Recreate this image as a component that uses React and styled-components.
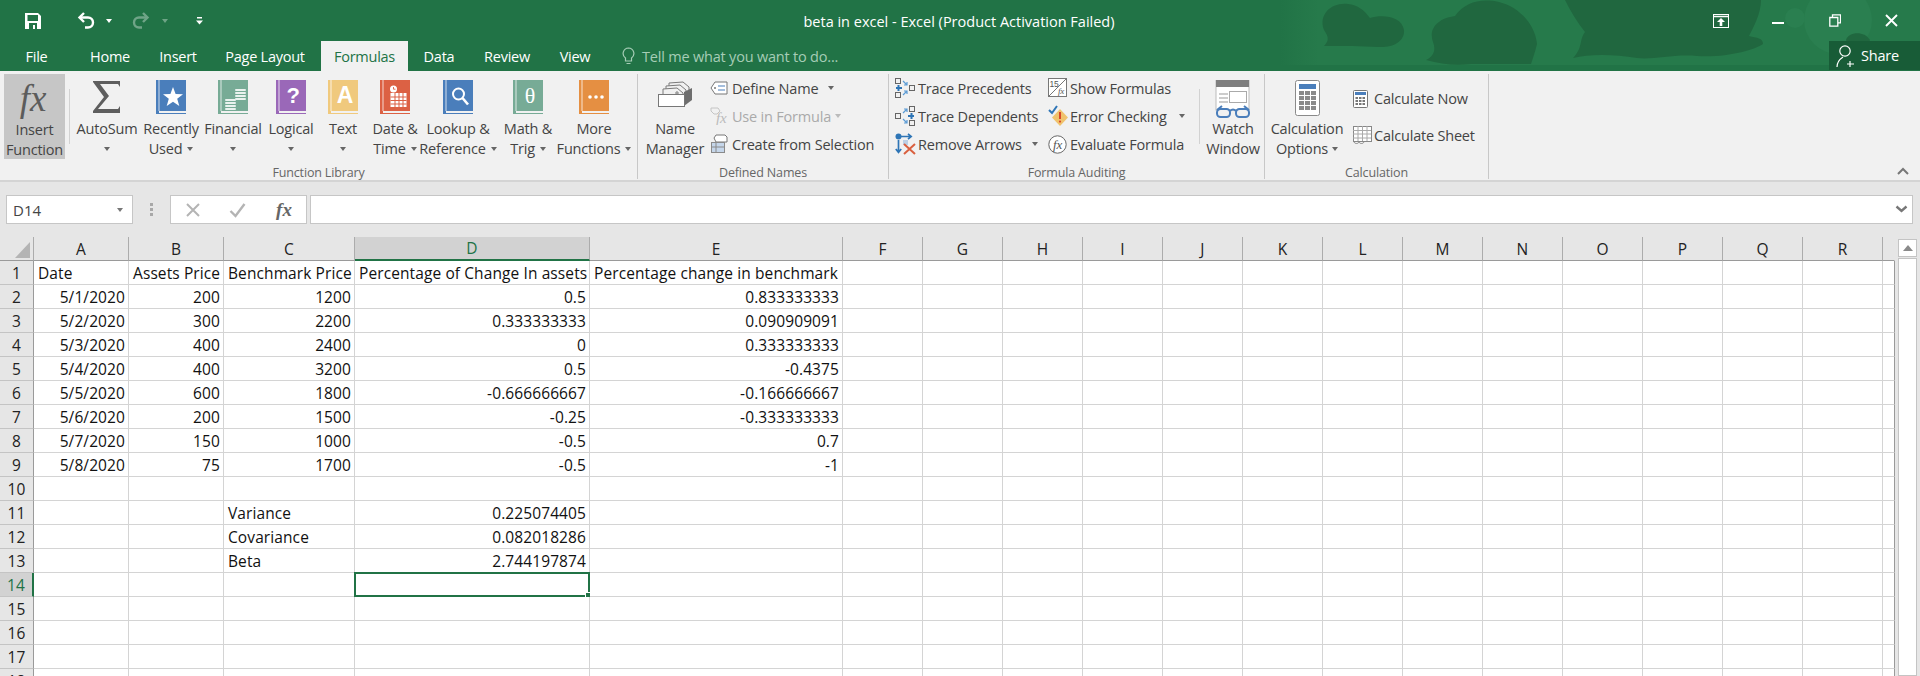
import React from 'react';
import styled, { createGlobalStyle } from 'styled-components';

const GREEN = '#217346';
const UI_FONT = '"Open Sans", "Liberation Sans", sans-serif';

const Global = createGlobalStyle`
  html, body {
    margin: 0;
    padding: 0;
    height: 676px;
    overflow: hidden;
    background: #e6e6e6;
  }
`;

const Page = styled.div`
  width: 1920px;
  height: 676px;
  overflow: hidden;
  font-family: ${UI_FONT};
  display: flex;
  flex-direction: column;
`;

const Header = styled.header`
  position: relative;
  height: 71px;
  flex: none;
  background: ${GREEN};
  color: #fff;
`;

const Clouds = styled.svg`
  position: absolute;
  top: 0;
  right: 0;
`;

const TitleBar = styled.div`
  position: relative;
  height: 41px;
  display: grid;
  grid-template-columns: 1fr auto 1fr;
  align-items: center;
`;

const Qat = styled.div`
  display: flex;
  align-items: center;
  height: 38px;
`;

const QatSlot = styled.div`
  width: ${p => p.$w}px;
  margin-left: ${p => p.$ml || 0}px;
  display: flex;
  justify-content: center;
  align-items: center;
  opacity: ${p => (p.$off ? 0.35 : 1)};
`;

const Title = styled.div`
  font-size: 14.5px;
  padding-right: 2px;
  margin-top: 1px;
`;

const WindowButtons = styled.div`
  display: flex;
  justify-content: flex-end;
  height: 38px;
`;

const WindowButton = styled.div`
  width: 57px;
  display: flex;
  justify-content: center;
  align-items: center;
`;

const TabRow = styled.nav`
  position: relative;
  height: 30px;
  display: flex;
  font-size: 14.5px;
`;

const Tab = styled.div`
  width: ${p => p.$w}px;
  display: flex;
  justify-content: center;
  align-items: center;
  letter-spacing: -0.25px;
  background: ${p => (p.$active ? '#f1f1f1' : 'transparent')};
  color: ${p => (p.$active ? GREEN : '#fff')};
`;

const TellMe = styled.div`
  display: flex;
  align-items: center;
  gap: 7px;
  margin-left: 16px;
  color: #a6cdb6;
  letter-spacing: -0.2px;
`;

const Share = styled.div`
  margin-left: auto;
  width: 91px;
  height: 29px;
  background: #185c37;
  display: flex;
  align-items: center;
  gap: 5px;
  padding-left: 7px;
  box-sizing: border-box;
  letter-spacing: -0.2px;
`;

const Ribbon = styled.section`
  height: 111px;
  flex: none;
  box-sizing: border-box;
  background: #f1f1f1;
  border-bottom: 2px solid #d4d4d4;
  display: flex;
  color: #444;
  font-size: 14.5px;
  letter-spacing: -0.2px;
`;

const Group = styled.div`
  width: ${p => p.$w}px;
  flex: none;
  box-sizing: border-box;
  margin-top: 3px;
  margin-bottom: 1px;
  border-right: 1px solid #c8c8c8;
  display: flex;
  flex-direction: column;
`;

const GroupBody = styled.div`
  flex: 1;
  display: flex;
  padding-left: ${p => p.$pad || 0}px;
`;

const GroupLabel = styled.div`
  height: 16px;
  font-size: 12.5px;
  line-height: 20px;
  letter-spacing: -0.15px;
  text-align: center;
  color: #666;
`;

const BigButton = styled.div`
  width: ${p => p.$w}px;
  height: 85px;
  flex: none;
  box-sizing: border-box;
  padding-top: 6px;
  display: flex;
  flex-direction: column;
  align-items: center;
  background: ${p => (p.$pressed ? '#c6c6c6' : 'transparent')};
`;

const BigIcon = styled.div`
  height: 40px;
  display: flex;
  align-items: flex-start;
`;

const BigLine = styled.div`
  height: 20px;
  line-height: 20px;
  white-space: nowrap;
  display: flex;
  align-items: center;
  gap: 4px;
`;

const Caret = styled.span`
  width: 0;
  height: 0;
  display: inline-block;
  margin-left: ${p => p.$ml || 0}px;
  border-left: 3.5px solid transparent;
  border-right: 3.5px solid transparent;
  border-top: 4px solid ${p => p.$color || '#666'};
`;

const VSep = styled.div`
  width: 1px;
  height: 55px;
  flex: none;
  margin: 15px 3px 0 4px;
  background: #d2d2d2;
`;

const SmallColumn = styled.div`
  width: ${p => p.$w}px;
  flex: none;
  display: flex;
  flex-direction: column;
  margin-left: ${p => p.$ml || 0}px;
  padding-top: ${p => (p.$top === undefined ? 0 : p.$top)}px;
`;

const SmallButton = styled.div`
  height: ${p => p.$h || 28}px;
  display: flex;
  align-items: center;
  white-space: nowrap;
  color: ${p => (p.$off ? '#aaa' : 'inherit')};
`;

const SmallIcon = styled.div`
  width: ${p => p.$w || 22}px;
  flex: none;
  display: flex;
  align-items: center;
`;

const RibbonEnd = styled.div`
  flex: 1;
  display: flex;
  justify-content: flex-end;
  align-items: flex-end;
  padding: 0 11px 5px 0;
`;

const FormulaBand = styled.div`
  height: 55px;
  flex: none;
  box-sizing: border-box;
  padding: 13px 7px 13px 6px;
  display: flex;
  align-items: stretch;
  background: #e6e6e6;
`;

const Field = styled.div`
  background: #fff;
  border: 1px solid #c6c6c6;
  box-sizing: border-box;
  display: flex;
  align-items: center;
`;

const NameBox = styled(Field)`
  width: 127px;
  flex: none;
  justify-content: space-between;
  padding: 0 9px 0 6px;
  font-size: 15px;
  color: #444;
`;

const GripDots = styled.div`
  width: 37px;
  flex: none;
  display: flex;
  flex-direction: column;
  align-items: center;
  justify-content: center;
  gap: 2px;
  & span {
    width: 3px;
    height: 3px;
    background: #a8a8a8;
  }
`;

const FxBox = styled(Field)`
  width: 137px;
  flex: none;
  gap: 28px;
  padding-left: 14px;
`;

const FormulaInput = styled(Field)`
  flex: 1;
  margin-left: 3px;
  justify-content: flex-end;
  padding-right: 4px;
`;

const SheetArea = styled.div`
  flex: 1;
  display: flex;
  min-height: 0;
`;

const SheetGrid = styled.div`
  display: grid;
  grid-template-columns: 34px 95px 95px 131px 235px 253px repeat(13, 80px) 12px;
  grid-auto-rows: 24px;
  width: 1895px;
  flex: none;
  font-size: 15.5px;
  letter-spacing: 0.1px;
  color: #111;
`;

const ColHead = styled.div`
  box-sizing: border-box;
  display: flex;
  justify-content: center;
  align-items: center;
  border-right: 1px solid ${p => (p.$end ? 'transparent' : '#acacac')};
  border-bottom: ${p => (p.$on ? `2px solid ${GREEN}` : '1px solid #9a9a9a')};
  background: ${p => (p.$on ? '#d2d2d2' : '#e6e6e6')};
  color: ${p => (p.$on ? GREEN : '#222')};
`;

const Corner = styled.div`
  box-sizing: border-box;
  border-right: 1px solid #acacac;
  border-bottom: 1px solid #9a9a9a;
  display: flex;
  justify-content: flex-end;
  align-items: flex-end;
  padding: 0 3px 2px 0;
`;

const RowHead = styled.div`
  box-sizing: border-box;
  display: flex;
  justify-content: center;
  align-items: center;
  border-right: ${p => (p.$on ? `2px solid ${GREEN}` : '1px solid #9a9a9a')};
  border-bottom: 1px solid #c4c4c4;
  background: ${p => (p.$on ? '#d2d2d2' : '#e6e6e6')};
  color: ${p => (p.$on ? GREEN : '#222')};
`;

const Cell = styled.div`
  position: relative;
  box-sizing: border-box;
  background: #fff;
  border-right: 1px solid ${p => (p.$last ? '#9a9a9a' : '#d4d4d4')};
  border-bottom: 1px solid #d4d4d4;
  padding: 0 3px 0 4px;
  line-height: 24px;
  white-space: nowrap;
  text-align: ${p => (p.$num ? 'right' : 'left')};
`;

const Selection = styled.div`
  position: absolute;
  inset: -1px;
  border: 2px solid ${GREEN};
  &::after {
    content: '';
    position: absolute;
    right: -4px;
    bottom: -4px;
    width: 5px;
    height: 5px;
    background: ${GREEN};
    border: 1px solid #fff;
  }
`;

const Scrollbar = styled.div`
  width: 19px;
  margin-left: 3px;
  flex: none;
  display: flex;
  flex-direction: column;
  gap: 1px;
  padding-top: 2px;
`;

const ScrollUp = styled.div`
  height: 18px;
  flex: none;
  box-sizing: border-box;
  background: #fff;
  border: 1px solid #c4c4c4;
  display: flex;
  justify-content: center;
  align-items: center;
`;

const ScrollThumb = styled.div`
  flex: 1;
  background: #fff;
  border: 1px solid #c4c4c4;
`;

/* ---- drawn icons ---- */

const Book = ({ color, children }) => (
  <svg width="30" height="34" viewBox="0 0 30 34">
    <rect width="30" height="34" fill={color} />
    <rect x="2.5" width="1" height="31" fill="#fff" opacity="0.75" />
    <rect x="3" y="31" width="27" height="2" fill="#f1f1f1" />
    {children}
  </svg>
);

const BookLetter = ({ children, size = 22, family = 'Liberation Sans', weight = 700, y = 23 }) => (
  <text x="17" y={y} textAnchor="middle" fill="#fff" fontFamily={family} fontSize={size} fontWeight={weight}>
    {children}
  </text>
);

const Coins = () => (
  <g fill="#fff" opacity="0.85">
    {[9, 12, 15, 18].map(y => (
      <rect key={y} x="17" y={y} width="11" height="2" rx="1" />
    ))}
    {[19, 22, 25, 28].map(y => (
      <rect key={y} x="7" y={y} width="11" height="2" rx="1" />
    ))}
  </g>
);

const icons = {
  fx: (
    <svg width="50" height="40" viewBox="0 0 50 40" overflow="visible">
      <text x="23" y="31" textAnchor="middle" fill="#5c5c5c" fontFamily="Liberation Serif" fontStyle="italic" fontSize="37">
        fx
      </text>
    </svg>
  ),
  sigma: (
    <svg width="30" height="34" viewBox="0 0 30 34">
      <path d="M1 1h27v6l-2-3H8l9 12L6 29h20l2-3v7H1v-2l11-14L1 2z" fill="#5e5e5e" />
    </svg>
  ),
  star: (
    <Book color="#4a7ebb">
      <polygon points="17,7 19.6,14 27,14.2 21.2,18.8 23.3,26 17,21.8 10.7,26 12.8,18.8 7,14.2 14.4,14" fill="#fff" />
    </Book>
  ),
  coins: (
    <Book color="#77ab96">
      <Coins />
    </Book>
  ),
  question: (
    <Book color="#9a68b8">
      <BookLetter>?</BookLetter>
    </Book>
  ),
  letter: (
    <Book color="#f0c97d">
      <BookLetter size={23}>A</BookLetter>
    </Book>
  ),
  date: (
    <Book color="#dc6144">
      <circle cx="13.5" cy="9" r="3.5" fill="#fff" />
      <path d="M13.5 7v2.2h2" fill="none" stroke="#dc6144" strokeWidth="0.9" />
      <rect x="10.5" y="13" width="16" height="14" fill="#fff" />
      <g fill="#dc6144">
        {[16.5, 20, 23.5].map(y => (
          <rect key={y} x="10.5" y={y} width="16" height="1" />
        ))}
        {[14.5, 18.5, 22.5].map(x => (
          <rect key={x} x={x} y="13" width="1" height="14" />
        ))}
      </g>
    </Book>
  ),
  lookup: (
    <Book color="#4a7ebb">
      <circle cx="15.5" cy="14" r="5.5" fill="none" stroke="#fff" strokeWidth="2" />
      <path d="M19.5 18l5.5 6.5" stroke="#fff" strokeWidth="2.6" />
    </Book>
  ),
  theta: (
    <Book color="#77ab96">
      <BookLetter size={22} family="Liberation Serif" weight={400} y={23}>θ</BookLetter>
    </Book>
  ),
  more: (
    <Book color="#e58f42">
      <g fill="#fff">
        <circle cx="11" cy="17" r="1.8" />
        <circle cx="17" cy="17" r="1.8" />
        <circle cx="23" cy="17" r="1.8" />
      </g>
    </Book>
  ),
  manager: (
    <svg width="36" height="28" viewBox="0 0 36 28">
      <g fill="#f1f1f1" stroke="#7a7a7a" strokeWidth="1">
        <path d="M12 3l14-1 6 5v8l-20 2z" />
        <path d="M9 6l14-1 6 5v8l-20 2z" />
        <path d="M6 9l14-1 6 5v8H6z" />
      </g>
      <circle cx="20" cy="13" r="1.2" fill="none" stroke="#777" />
      <path d="M27 12l8-4v12l-8 6z" fill="#6e6e6e" />
      <rect x="1.5" y="14.5" width="26" height="12" fill="#fff" stroke="#777" />
    </svg>
  ),
  tag: (
    <svg width="18" height="14" viewBox="0 0 18 14">
      <path d="M5 1h12v12H5L1 7z" fill="#fff" stroke="#777" />
      <circle cx="5" cy="7" r="1" fill="#777" />
      <path d="M8 5h7M8 9h7" stroke="#4a7ebb" strokeWidth="1.2" />
    </svg>
  ),
  useFx: (
    <svg width="20" height="18" viewBox="0 0 20 18">
      <path d="M1 1h7l2 3-3 3H4L1 4z" fill="none" stroke="#c4c4c4" />
      <text x="6" y="16" fill="#bbb" fontFamily="Liberation Serif" fontStyle="italic" fontSize="15">fx</text>
    </svg>
  ),
  create: (
    <svg width="18" height="20" viewBox="0 0 18 20">
      <path d="M6 1h9l2 2v5H6L4 4z" fill="#fff" stroke="#777" />
      <rect x="1.5" y="8.5" width="13" height="10" fill="#c5d6ea" stroke="#8a8a8a" />
      <path d="M1 13h13M6 8v10" stroke="#8a8a8a" />
    </svg>
  ),
  tracePre: (
    <svg width="20" height="20" viewBox="0 0 20 20">
      <g fill="none" stroke="#666">
        <rect x="0.5" y="0.5" width="5" height="5" />
        <rect x="0.5" y="14.5" width="5" height="5" />
        <rect x="14.5" y="7.5" width="5" height="5" />
      </g>
      <path d="M1 10h6M3.5 7v6" stroke="#2e75b6" strokeWidth="2" />
      <path d="M8 3l4 4m0-3v3H9M8 17l4-4m0 3v-3H9" fill="none" stroke="#5b9bd5" strokeWidth="1.2" />
    </svg>
  ),
  traceDep: (
    <svg width="20" height="20" viewBox="0 0 20 20">
      <g fill="none" stroke="#666">
        <rect x="14.5" y="0.5" width="5" height="5" />
        <rect x="14.5" y="14.5" width="5" height="5" />
        <rect x="0.5" y="7.5" width="5" height="5" />
      </g>
      <path d="M13 10h6M16.5 7v6" stroke="#2e75b6" strokeWidth="2" />
      <path d="M8 7l4-4m-3 0h3v3M8 13l4 4m-3 0h3v-3" fill="none" stroke="#5b9bd5" strokeWidth="1.2" />
    </svg>
  ),
  removeArrows: (
    <svg width="21" height="22" viewBox="0 0 21 22">
      <circle cx="3.5" cy="3.5" r="3" fill="#2e75b6" />
      <path d="M6 3.5h10M13 .8l3.2 2.7L13 6.2M3.5 7v12M.8 16l2.7 3.4L6.2 16" fill="none" stroke="#2e75b6" strokeWidth="1.7" />
      <rect x="8" y="7" width="5" height="5" fill="#bcd0e6" />
      <path d="M9 11l11 10M20 11L9 21" stroke="#d9603f" strokeWidth="2" />
    </svg>
  ),
  showFormulas: (
    <svg width="19" height="20" viewBox="0 0 19 20">
      <rect x="0.5" y="0.5" width="18" height="18" fill="#fff" stroke="#777" />
      <path d="M18 1L1 18" stroke="#777" />
      <text x="1.5" y="9" fill="#555" fontFamily="Liberation Sans" fontSize="8.5">15</text>
      <text x="10" y="16" fill="#555" fontFamily="Liberation Serif" fontStyle="italic" fontSize="9">fx</text>
    </svg>
  ),
  errorCheck: (
    <svg width="20" height="22" viewBox="0 0 20 22">
      <path d="M1 5l3 3 5-7" fill="none" stroke="#2e75b6" strokeWidth="2" />
      <path d="M12 4l8 8.5-8 8.5-8-8.5z" fill="#f0c36d" />
      <path d="M12 7v7" stroke="#d9482b" strokeWidth="2" />
      <circle cx="12" cy="16.6" r="1.1" fill="#d9482b" />
    </svg>
  ),
  evaluate: (
    <svg width="19" height="19" viewBox="0 0 19 19">
      <circle cx="9.5" cy="9.5" r="8.7" fill="#fff" stroke="#666" />
      <text x="9.5" y="14" textAnchor="middle" fill="#555" fontFamily="Liberation Serif" fontStyle="italic" fontSize="13">fx</text>
    </svg>
  ),
  watch: (
    <svg width="37" height="38" viewBox="0 0 37 38">
      <rect x="1" y="0" width="33" height="30" fill="#fff" stroke="#bbb" />
      <rect x="1" y="0" width="33" height="7" fill="#7f7f7f" />
      <path d="M4 14h9M4 18h9M4 22h9" stroke="#999" />
      <rect x="14.5" y="11.5" width="17" height="11" fill="#fff" stroke="#aaa" />
      <g fill="#f1f1f1" stroke="#4a7ebb" strokeWidth="2">
        <rect x="2" y="29" width="13" height="8" rx="3.5" />
        <rect x="21" y="29" width="13" height="8" rx="3.5" />
      </g>
      <path d="M15 31c2-2 4-2 6 0M2 30l5-4M34 30l-5-4" fill="none" stroke="#4a7ebb" strokeWidth="2" />
    </svg>
  ),
  calcBig: (
    <svg width="25" height="36" viewBox="0 0 25 36">
      <rect x="0.5" y="0.5" width="24" height="35" rx="2" fill="#fff" stroke="#8a8a8a" />
      <rect x="4" y="4" width="17" height="5" fill="#4a7ebb" />
      <g fill="#8a8a8a">
        {[11, 16, 21, 26].map(y =>
          [4, 10, 16].map(x => <rect key={`${x}-${y}`} x={x} y={y} width="5" height="4" />)
        )}
      </g>
    </svg>
  ),
  calcNow: (
    <svg width="15" height="18" viewBox="0 0 15 18">
      <rect x="0.5" y="0.5" width="14" height="17" rx="1" fill="#fff" stroke="#777" />
      <rect x="2" y="2" width="11" height="3" fill="#4a7ebb" />
      <g fill="#777">
        {[7, 10, 13].map(y =>
          [2.5, 6, 9.5].map(x => <rect key={`${x}-${y}`} x={x} y={y} width="2.5" height="2" />)
        )}
      </g>
    </svg>
  ),
  calcSheet: (
    <svg width="19" height="19" viewBox="0 0 19 19">
      <rect x="0.5" y="0.5" width="18" height="15" fill="#fff" stroke="#888" />
      <path d="M0 4.5h18M0 8h18M0 12h18M5 0v15M9.5 0v15M14 0v15" stroke="#aaa" />
      <path d="M1 16c1 2 4 2 5 0 1 2 4 2 5 0" fill="none" stroke="#888" />
    </svg>
  ),
};

const SaveIcon = () => (
  <svg width="16" height="16" viewBox="0 0 16 16">
    <path d="M0 0h13l3 3v13H0z" fill="#fff" />
    <rect x="2.5" y="2" width="10.5" height="6" fill={GREEN} />
    <rect x="4" y="10" width="8" height="6" fill={GREEN} />
    <rect x="8" y="12" width="2" height="4" fill="#fff" />
  </svg>
);

const UndoIcon = ({ flip }) => (
  <svg width="19" height="19" viewBox="0 0 19 19" style={flip ? { transform: 'scaleX(-1)' } : undefined}>
    <path d="M7 2L2.5 6.5 7 11" fill="none" stroke="#fff" strokeWidth="2.4" />
    <path d="M3 6.5h8a5 5 0 0 1 0 10H8" fill="none" stroke="#fff" strokeWidth="2.4" />
  </svg>
);

const QatMore = () => (
  <svg width="7" height="8" viewBox="0 0 7 8">
    <rect x="1" width="5" height="1.5" fill="#fff" />
    <path d="M0 3.5h7L3.5 7.5z" fill="#fff" />
  </svg>
);

const BulbIcon = () => (
  <svg width="13" height="18" viewBox="0 0 13 18">
    <path d="M6.5 1A5.5 5.5 0 0 0 3.5 11v3h6v-3A5.5 5.5 0 0 0 6.5 1zM4.5 16.5h4" fill="none" stroke="#a6cdb6" strokeWidth="1.2" />
  </svg>
);

const ShareIcon = () => (
  <svg width="20" height="24" viewBox="0 0 20 24">
    <circle cx="9" cy="7" r="5.2" fill="none" stroke="#fff" strokeWidth="1.2" />
    <path d="M1 23c0-5 3-8 6-10M14 17v6M11 20h7" fill="none" stroke="#fff" strokeWidth="1.2" />
  </svg>
);

const WINDOW_ICONS = [
  <svg key="display" width="16" height="14" viewBox="0 0 16 14">
    <rect x="0.5" y="0.5" width="15" height="13" fill="none" stroke="#fff" />
    <path d="M0 2.5h16" stroke="#fff" strokeWidth="1.5" />
    <path d="M8 4l-4 4h2.7v4h2.6V8H12z" fill="#fff" />
  </svg>,
  <svg key="min" width="12" height="12" viewBox="0 0 12 12">
    <rect y="7" width="12" height="2" fill="#fff" />
  </svg>,
  <svg key="restore" width="12" height="13" viewBox="0 0 12 13">
    <path d="M3.5 3V.8h8v8H9M.8 3.5h8v8.7h-8z" fill="none" stroke="#fff" strokeWidth="1.3" />
  </svg>,
  <svg key="close" width="13" height="13" viewBox="0 0 13 13">
    <path d="M1 1l11 11M12 1L1 12" stroke="#fff" strokeWidth="1.9" />
  </svg>,
];

/* ---- data ---- */

const TABS = [
  ['File', 73],
  ['Home', 74],
  ['Insert', 62],
  ['Page Layout', 112],
  ['Formulas', 87],
  ['Data', 62],
  ['Review', 74],
  ['View', 62],
];

const LIBRARY = [
  { icon: 'sigma', w: 68, lines: ['AutoSum'], caret: 'below' },
  { icon: 'star', w: 60, lines: ['Recently', 'Used'], caret: 'inline' },
  { icon: 'coins', w: 64, lines: ['Financial'], caret: 'below' },
  { icon: 'question', w: 52, lines: ['Logical'], caret: 'below' },
  { icon: 'letter', w: 52, lines: ['Text'], caret: 'below' },
  { icon: 'date', w: 52, lines: ['Date &', 'Time'], caret: 'inline' },
  { icon: 'lookup', w: 74, lines: ['Lookup &', 'Reference'], caret: 'inline' },
  { icon: 'theta', w: 66, lines: ['Math &', 'Trig'], caret: 'inline' },
  { icon: 'more', w: 66, lines: ['More', 'Functions'], caret: 'inline' },
];

const COLS = ['A', 'B', 'C', 'D', 'E', 'F', 'G', 'H', 'I', 'J', 'K', 'L', 'M', 'N', 'O', 'P', 'Q', 'R'];

const ROWS = {
  1: ['Date', 'Assets Price', 'Benchmark Price', 'Percentage of Change In assets', 'Percentage change in benchmark'],
  2: ['5/1/2020', 200, 1200, 0.5, 0.833333333],
  3: ['5/2/2020', 300, 2200, 0.333333333, 0.090909091],
  4: ['5/3/2020', 400, 2400, 0, 0.333333333],
  5: ['5/4/2020', 400, 3200, 0.5, -0.4375],
  6: ['5/5/2020', 600, 1800, -0.666666667, -0.166666667],
  7: ['5/6/2020', 200, 1500, -0.25, -0.333333333],
  8: ['5/7/2020', 150, 1000, -0.5, 0.7],
  9: ['5/8/2020', 75, 1700, -0.5, -1],
  11: [null, null, 'Variance', 0.225074405],
  12: [null, null, 'Covariance', 0.082018286],
  13: [null, null, 'Beta', 2.744197874],
};

const isRight = (value, col, row) => row !== 1 && value !== null && value !== undefined && (typeof value === 'number' || col === 0);

/* ---- ribbon parts ---- */

const LibraryButton = ({ icon, w, lines, caret }) => (
  <BigButton $w={w}>
    <BigIcon>{icons[icon]}</BigIcon>
    <BigLine>{lines[0]}</BigLine>
    <BigLine>
      {lines[1]}
      {caret === 'below' && <Caret />}
      {caret === 'inline' && <Caret $ml={1} />}
    </BigLine>
  </BigButton>
);

const SmallAction = ({ icon, slot, caret, off, h, children }) => (
  <SmallButton $off={off} $h={h}>
    <SmallIcon $w={slot}>{icons[icon]}</SmallIcon>
    {children}
    {caret && <Caret $ml={caret} $color={off ? '#bbb' : '#666'} />}
  </SmallButton>
);

const CloudArt = () => (
  <Clouds width="640" height="65" viewBox="1280 0 640 65">
    <defs>
      <linearGradient id="band" x1="0" x2="1" y1="0" y2="0">
        <stop offset="0" stopColor="#267a4b" stopOpacity="0" />
        <stop offset="0.06" stopColor="#267a4b" stopOpacity="1" />
      </linearGradient>
    </defs>
    <rect x="1280" width="640" height="65" fill="url(#band)" />
    <g fill="#2a7f50">
      <circle cx="1838" cy="20" r="34" />
      <circle cx="1795" cy="18" r="10" />
    </g>
    <g fill="#20673f">
      <path d="M1324 46c6-6 4-10 0-16-6-16 8-28 24-26 10 1 16 6 22 14 12-4 32-2 34 12 1 12-12 18-26 17-18-1-32-1-54-1z" />
      <path d="M1426 60c8-4 10-10 7-18-5-14 6-24 22-26 10-14 26-18 44-14 20 5 36 22 38 42-2 8-4 14-6 20h-60c-16 2-30 0-45-4z" />
      <path d="M1565 0h196c0 14-8 28-12 36 8 2 14 2 14 8-8 6-38 14-66 12-24-2-44 4-60 2-24-4-48-4-64 0 10-10 6-18 12-26-8-10-14-20-20-32z" />
      <path d="M1846 40c2-8 18-10 24 0l-4 8h-16z" />
    </g>
  </Clouds>
);

export default function App() {
  return (
    <Page>
      <Global />

      <Header>
        <CloudArt />
        <TitleBar>
          <Qat>
            <QatSlot $w={66}><SaveIcon /></QatSlot>
            <QatSlot $w={40}><UndoIcon /></QatSlot>
            <QatSlot $w={6}><Caret $color="#fff" /></QatSlot>
            <QatSlot $w={44} $ml={6} $off><UndoIcon flip /></QatSlot>
            <QatSlot $w={6} $off><Caret $color="#fff" /></QatSlot>
            <QatSlot $w={10} $ml={26}><QatMore /></QatSlot>
          </Qat>
          <Title>beta in excel - Excel (Product Activation Failed)</Title>
          <WindowButtons>
            {WINDOW_ICONS.map(icon => (
              <WindowButton key={icon.key}>{icon}</WindowButton>
            ))}
          </WindowButtons>
        </TitleBar>
        <TabRow>
          {TABS.map(([label, w]) => (
            <Tab key={label} $w={w} $active={label === 'Formulas'}>{label}</Tab>
          ))}
          <TellMe>
            <BulbIcon />
            Tell me what you want to do...
          </TellMe>
          <Share>
            <ShareIcon />
            Share
          </Share>
        </TabRow>
      </Header>

      <Ribbon>
        <Group $w={638}>
          <GroupBody $pad={4}>
            <BigButton $w={61} $pressed>
              <BigIcon>{icons.fx}</BigIcon>
              <BigLine>Insert</BigLine>
              <BigLine>Function</BigLine>
            </BigButton>
            <VSep />
            {LIBRARY.map(item => (
              <LibraryButton key={item.icon} {...item} />
            ))}
          </GroupBody>
          <GroupLabel>Function Library</GroupLabel>
        </Group>

        <Group $w={251}>
          <GroupBody $pad={2}>
            <BigButton $w={70}>
              <BigIcon>{icons.manager}</BigIcon>
              <BigLine>Name</BigLine>
              <BigLine>Manager</BigLine>
            </BigButton>
            <SmallColumn $w={175}>
              <SmallAction icon="tag" caret={10}>Define Name</SmallAction>
              <SmallAction icon="useFx" caret={4} off>Use in Formula</SmallAction>
              <SmallAction icon="create">Create from Selection</SmallAction>
            </SmallColumn>
          </GroupBody>
          <GroupLabel>Defined Names</GroupLabel>
        </Group>

        <Group $w={376}>
          <GroupBody $pad={6}>
            <SmallColumn $w={153}>
              <SmallAction icon="tracePre" slot={23}>Trace Precedents</SmallAction>
              <SmallAction icon="traceDep" slot={23}>Trace Dependents</SmallAction>
              <SmallAction icon="removeArrows" slot={23} caret={10}>Remove Arrows</SmallAction>
            </SmallColumn>
            <SmallColumn $w={147}>
              <SmallAction icon="showFormulas">Show Formulas</SmallAction>
              <SmallAction icon="errorCheck" caret={12}>Error Checking</SmallAction>
              <SmallAction icon="evaluate">Evaluate Formula</SmallAction>
            </SmallColumn>
            <VSep />
            <BigButton $w={60}>
              <BigIcon>{icons.watch}</BigIcon>
              <BigLine>Watch</BigLine>
              <BigLine>Window</BigLine>
            </BigButton>
          </GroupBody>
          <GroupLabel>Formula Auditing</GroupLabel>
        </Group>

        <Group $w={224}>
          <GroupBody $pad={3}>
            <BigButton $w={78}>
              <BigIcon>{icons.calcBig}</BigIcon>
              <BigLine>Calculation</BigLine>
              <BigLine>Options<Caret /></BigLine>
            </BigButton>
            <SmallColumn $w={135} $ml={7} $top={6}>
              <SmallAction icon="calcNow" slot={21} h={37}>Calculate Now</SmallAction>
              <SmallAction icon="calcSheet" slot={21} h={37}>Calculate Sheet</SmallAction>
            </SmallColumn>
          </GroupBody>
          <GroupLabel>Calculation</GroupLabel>
        </Group>

        <RibbonEnd>
          <svg width="12" height="8" viewBox="0 0 12 8">
            <path d="M1 7l5-5 5 5" fill="none" stroke="#777" strokeWidth="2" />
          </svg>
        </RibbonEnd>
      </Ribbon>

      <FormulaBand>
        <NameBox>
          D14
          <Caret $color="#777" />
        </NameBox>
        <GripDots>
          <span />
          <span />
          <span />
        </GripDots>
        <FxBox>
          <svg width="16" height="16" viewBox="0 0 16 16">
            <path d="M2 2l12 12M14 2L2 14" stroke="#b4b4b4" strokeWidth="2" />
          </svg>
          <svg width="17" height="16" viewBox="0 0 17 16">
            <path d="M1.5 9l5 5L15.5 2" fill="none" stroke="#b4b4b4" strokeWidth="2.4" />
          </svg>
          <svg width="20" height="22" viewBox="0 0 20 22">
            <text x="10" y="17" textAnchor="middle" fill="#666" fontFamily="Liberation Serif" fontStyle="italic" fontWeight="700" fontSize="19">fx</text>
          </svg>
        </FxBox>
        <FormulaInput>
          <svg width="13" height="9" viewBox="0 0 13 9">
            <path d="M1.5 1.5l5 4.5 5-4.5" fill="none" stroke="#777" strokeWidth="2.4" />
          </svg>
        </FormulaInput>
      </FormulaBand>

      <SheetArea>
        <SheetGrid>
          <Corner>
            <svg width="15" height="16" viewBox="0 0 15 16">
              <path d="M15 0v16H0z" fill="#b4b4b4" />
            </svg>
          </Corner>
          {COLS.map(col => (
            <ColHead key={col} $on={col === 'D'}>{col}</ColHead>
          ))}
          <ColHead $end />
          {Array.from({ length: 18 }, (_, i) => i + 1).map(row => (
            <React.Fragment key={row}>
              <RowHead $on={row === 14}>{row}</RowHead>
              {COLS.map((col, c) => {
                const value = ROWS[row] ? ROWS[row][c] : null;
                return (
                  <Cell key={col} $num={isRight(value, c, row)}>
                    {value}
                    {row === 14 && col === 'D' && <Selection />}
                  </Cell>
                );
              })}
              <Cell $last />
            </React.Fragment>
          ))}
        </SheetGrid>
        <Scrollbar>
          <ScrollUp>
            <svg width="10" height="6" viewBox="0 0 10 6">
              <path d="M5 0l5 6H0z" fill="#8a8a8a" />
            </svg>
          </ScrollUp>
          <ScrollThumb />
        </Scrollbar>
      </SheetArea>
    </Page>
  );
}
